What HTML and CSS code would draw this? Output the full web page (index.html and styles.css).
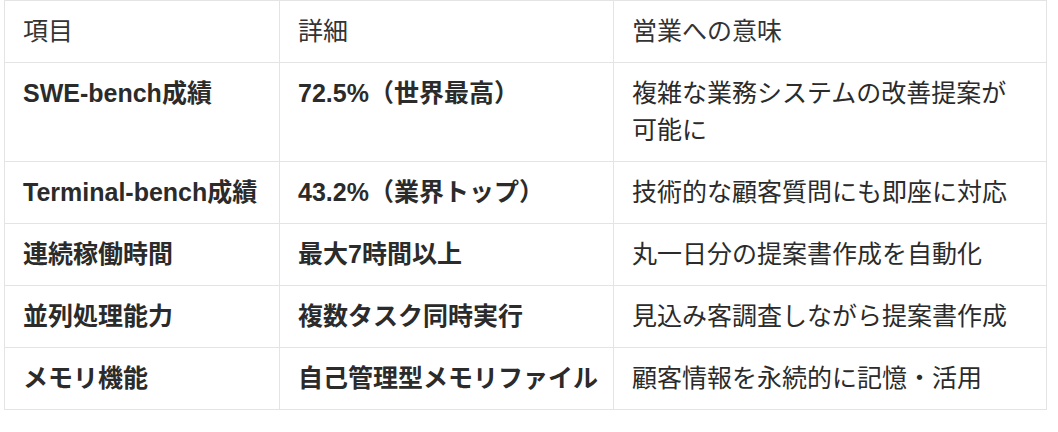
FILE: index.html
```html
<!DOCTYPE html>
<html lang="ja">
<head>
<meta charset="utf-8">
<link rel="stylesheet" href="styles.css">
</head>
<body>
<table class="spec">
  <colgroup>
    <col class="c1"><col class="c2"><col class="c3">
  </colgroup>
  <thead>
    <tr><th>項目</th><th>詳細</th><th>営業への意味</th></tr>
  </thead>
  <tbody>
    <tr><td class="b">SWE-bench成績</td><td class="b nw">72.5%（世界最高）</td><td>複雑な業務システムの改善提案が可能に</td></tr>
    <tr><td class="b">Terminal-bench成績</td><td class="b nw">43.2%（業界トップ）</td><td>技術的な顧客質問にも即座に対応</td></tr>
    <tr><td class="b">連続稼働時間</td><td class="b nw">最大7時間以上</td><td>丸一日分の提案書作成を自動化</td></tr>
    <tr><td class="b">並列処理能力</td><td class="b nw">複数タスク同時実行</td><td>見込み客調査しながら提案書作成</td></tr>
    <tr><td class="b">メモリ機能</td><td class="b nw">自己管理型メモリファイル</td><td>顧客情報を永続的に記憶・活用</td></tr>
  </tbody>
</table>
</body>
</html>
```
FILE: styles.css
```css
html, body {
  margin: 0;
  padding: 0;
  background: #ffffff;
}
body {
  padding-left: 4px;
}
.spec {
  border-collapse: collapse;
  table-layout: fixed;
  width: 1042px;
  font-family: "Liberation Sans", "Noto Sans CJK JP", sans-serif;
  font-size: 25px;
  line-height: 37px;
  color: #2b2b2b;
}
.spec .c1 { width: 275px; }
.spec .c2 { width: 334px; }
.spec .c3 { width: 433px; }
.spec th,
.spec td {
  border: 1px solid #e4e4e4;
  padding: 12px 18px;
  text-align: left;
  vertical-align: top;
}
.spec th {
  font-weight: 400;
  color: #333333;
}
.spec td.b {
  font-weight: 700;
}
.spec td.nw {
  white-space: nowrap;
}
```
